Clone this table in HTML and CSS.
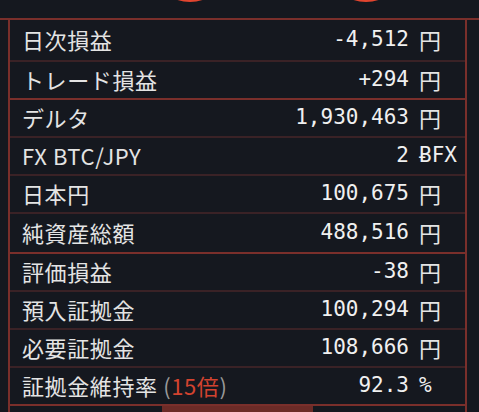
FILE: index.html
```
<!DOCTYPE html>
<html lang="ja">
<head>
<meta charset="utf-8">
<title>資産</title>
<link rel="stylesheet" href="styles.css">
</head>
<body>
<div class="top">
  <span class="dot"></span>
  <span class="dot"></span>
</div>
<div class="panel">
  <section class="group">
    <div class="row row--first"><span class="label">日次損益</span><span class="num">-4,512</span><span class="unit">円</span></div>
    <div class="row"><span class="label">トレード損益</span><span class="num">+294</span><span class="unit">円</span></div>
  </section>
  <section class="group">
    <div class="row"><span class="label">デルタ</span><span class="num">1,930,463</span><span class="unit">円</span></div>
    <div class="row"><span class="label">FX BTC/JPY</span><span class="num">2</span><span class="unit unit--mono">ɃFX</span></div>
    <div class="row"><span class="label">日本円</span><span class="num">100,675</span><span class="unit">円</span></div>
    <div class="row row--tall"><span class="label">純資産総額</span><span class="num">488,516</span><span class="unit">円</span></div>
  </section>
  <section class="group">
    <div class="row"><span class="label">評価損益</span><span class="num">-38</span><span class="unit">円</span></div>
    <div class="row"><span class="label">預入証拠金</span><span class="num">100,294</span><span class="unit">円</span></div>
    <div class="row"><span class="label">必要証拠金</span><span class="num">108,666</span><span class="unit">円</span></div>
    <div class="row"><span class="label">証拠金維持率 <span class="paren">(</span><span class="lev">15倍</span><span class="paren">)</span></span><span class="num">92.3</span><span class="unit unit--mono">%</span></div>
  </section>
</div>
<div class="tabs">
  <div class="tab"></div>
  <div class="tab tab--active"></div>
  <div class="tab"></div>
</div>
</body>
</html>
```
FILE: styles.css
```
html, body {
  margin: 0;
  padding: 0;
}
body {
  background: #15181f;
  color: #e6e6e6;
  font-family: "Noto Sans CJK JP", "Noto Sans", sans-serif;
  width: 479px;
  height: 412px;
  overflow: hidden;
}
.top {
  height: 18px;
  border-bottom: 2px solid #7a2f2b;
  overflow: hidden;
  display: flex;
  padding-left: 150px;
  gap: 96px;
}
.dot {
  width: 80px;
  height: 80px;
  border-radius: 50%;
  background: #e2452f;
  margin-top: -78px;
  flex: none;
}
.panel {
  margin: 0 12px 0 8px;
  border-left: 2px solid #7a2f2b;
  border-right: 2px solid #7a2f2b;
}
.group {
  border-bottom: 2px solid #7a2f2b;
}
.row {
  height: 36px;
  display: flex;
  align-items: center;
  padding-left: 12px;
  padding-bottom: 3px;
  box-sizing: border-box;
}
.row + .row {
  border-top: 2px solid #3a2226;
  height: 38px;
}
.row--first {
  height: 40px;
}
.row.row--tall {
  height: 40px;
}
.label {
  flex: 1;
  font-size: 22px;
  letter-spacing: 0.6px;
  color: #e4e4e4;
  white-space: nowrap;
}
.paren {
  color: #9a9a9a;
}
.lev {
  color: #d2432f;
}
.num {
  font-family: "DejaVu Sans Mono", monospace;
  font-size: 21px;
  color: #f0f0f0;
  text-align: right;
}
.unit {
  width: 56px;
  padding-left: 10px;
  box-sizing: border-box;
  font-size: 22px;
  color: #e4e4e4;
}
.unit--mono {
  font-family: "DejaVu Sans Mono", monospace;
  font-size: 21px;
  color: #f0f0f0;
}
.tabs {
  margin: 0 12px 0 8px;
  border-left: 2px solid #7a2f2b;
  border-right: 2px solid #7a2f2b;
  display: grid;
  grid-template-columns: 1fr 1fr 1fr;
  height: 40px;
}
.tab--active {
  background: #6c2b27;
}
```
